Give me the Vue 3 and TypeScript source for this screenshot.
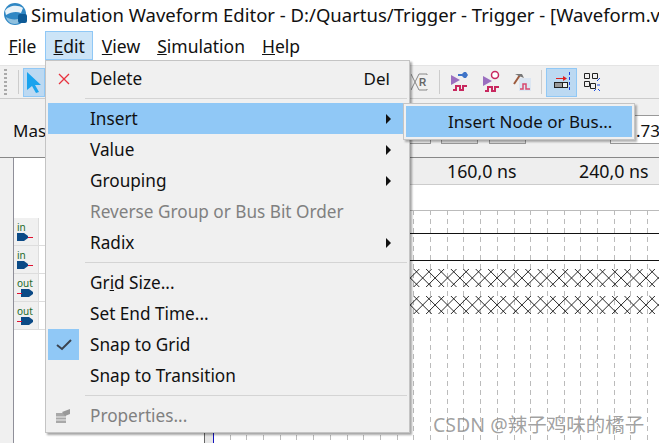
<template>
  <div class="page">
    <!-- 标题栏 -->
    <div class="titlebar">
      <svg class="logo" width="24" height="24" viewBox="0 0 24 24">
        <circle cx="12" cy="12" r="11" fill="#2f87c4" />
        <path d="M2 9c3-5 12-7 18-3l-2 5c-5-2-10-1-15 2z" fill="#e8f2f8" />
        <path d="M3 15c3 2 8 3 12 2l1 4c-5 2-11 1-13-6z" fill="#8fc0de" />
        <rect x="15" y="12" width="9" height="9" rx="2" fill="#0d5a96" />
      </svg>
      <span>Simulation Waveform Editor - D:/Quartus/Trigger - Trigger - [Waveform.v</span>
    </div>

    <!-- 菜单栏 -->
    <div class="menubar">
      <span v-for="m in menus" :key="m.rest" class="menu-title" :class="{ open: m.open }"><u>{{ m.key }}</u>{{ m.rest }}</span>
    </div>

    <!-- 工具栏 -->
    <div class="toolbar">
      <div class="grip"></div>
      <div class="tool-sep first"></div>
      <div class="tool-btn active">
        <svg width="18" height="24" viewBox="0 0 18 24"><path d="M2 2l14 13h-6l4 7-3 1-4-7-5 4z" fill="#19a3ee" /></svg>
      </div>
      <div class="tool-spacer"></div>
      <svg class="tool-icon" width="18" height="18" viewBox="0 0 18 18" fill="none">
        <path d="M0 1l4 8-4 8M4 9l4-8h8v1M4 9l4 8h8v-1" stroke="#888" />
        <text x="8" y="13" class="r-glyph">R</text>
      </svg>
      <div class="tool-sep"></div>
      <svg class="tool-icon wide" width="18" height="24" viewBox="0 0 18 24">
        <path d="M1 5l9 5-9 5z" fill="#9b6fc0" />
        <path d="M8 4h4l2-2h2l2 3-2 3h-2l-2-2H8z" fill="#3f74c8" />
        <path d="M3 20h3v-4h4v4h3v-4h4" fill="none" stroke="#c8285f" stroke-width="2" />
      </svg>
      <svg class="tool-icon wide" width="18" height="24" viewBox="0 0 18 24">
        <path d="M1 6l9 5-9 5z" fill="#9b6fc0" />
        <circle cx="13" cy="5" r="3.5" fill="#fff" stroke="#c8285f" stroke-width="1.5" />
        <path d="M3 21h3v-4h4v4h3v-4h4" fill="none" stroke="#c8285f" stroke-width="2" />
      </svg>
      <svg class="tool-icon wide" width="18" height="24" viewBox="0 0 18 24">
        <rect x="6" y="8" width="12" height="13" fill="#dce6f2" />
        <path d="M1 14l6-9" stroke="#9c5a3c" stroke-width="2" />
        <path d="M2 4h7l2 4-5-2z" fill="#777" />
        <path d="M7 19h3v-5h3v5h4" fill="none" stroke="#d8486f" stroke-width="1.5" />
      </svg>
      <div class="tool-sep tight"></div>
      <div class="tool-btn active snap">
        <svg width="20" height="22" viewBox="0 0 20 22" fill="none">
          <path d="M5 7.500h9" stroke="#e02020" />
          <path d="M12 5l4 2.500-4 2.500z" fill="#e02020" />
          <rect x="3.500" y="11.500" width="13" height="5" fill="#999" stroke="#222" />
          <rect x="11.500" y="11.500" width="5" height="5" fill="#eee" stroke="#222" />
          <path d="M18.500 1v20" stroke="#1c3fe0" stroke-dasharray="3 2" />
        </svg>
      </div>
      <svg class="tool-icon last" width="18" height="20" viewBox="0 0 18 20" fill="none">
        <path d="M1.500 1.500h5v5h-5zM9.500 1.500h5v5h-5zM1.500 9.500h5v5h-5zM7.500 11.500h5v5h-5z" stroke="#222" />
        <path d="M14 9l3-3M14 13h3M13 17l-2 2M15 17l2 2" stroke="#2050e0" />
      </svg>
    </div>

    <!-- 主时间条 -->
    <div class="master-row">
      <span class="master-label">Mas</span>
      <div class="mini-box plain"></div>
      <div class="mini-box gray"></div>
      <div class="mini-box gray"></div>
      <div class="time-input">.73</div>
    </div>

    <!-- 波形编辑区 -->
    <div class="editor">
      <div class="names">
        <div class="name-head"></div>
        <div v-for="(p, i) in pins" :key="i" class="pin-row">
          <div class="pin-cell">
            <span class="pin-label">{{ p }}</span>
            <svg width="16" height="8" viewBox="0 0 16 8">
              <path v-if="p === 'in'" d="M0 0h7l4 3v2L7 8H0z" fill="#0b4a86" />
              <path v-if="p === 'in'" d="M11 4.500h5" stroke="#e01030" stroke-width="1" />
              <path v-if="p === 'out'" d="M4 0h8l4 3v2l-4 3H4z" fill="#0b4a86" />
              <path v-if="p === 'out'" d="M0 4.500h5" stroke="#e01030" stroke-width="1" />
            </svg>
          </div>
        </div>
      </div>
      <div class="value-col"></div>
      <div class="wave">
        <div class="ruler">
          <span class="tick first">160,0 ns</span>
          <span class="tick">240,0 ns</span>
        </div>
        <svg class="wave-svg" width="446" height="259" viewBox="0 0 446 259" fill="none">
          <path d="M0 .5h446" stroke="#bbb" />
          <path v-for="x in gridX" :key="x" :d="`M${x} 0v259`" stroke="#bbb" stroke-dasharray="5 4" />
          <path d="M0 23.500h446M0 50.500h446" stroke="#111" />
          <path v-for="c in crosses" :key="c" :d="c" stroke="#111" stroke-width=".9" />
        </svg>
      </div>
    </div>

    <!-- 展开的 Edit 菜单 -->
    <div class="menu">
      <template v-for="item in items" :key="item.label">
        <div v-if="item.sep" class="menu-sep"></div>
        <div class="menu-item" :class="{ hover: item.hover, disabled: item.disabled }">
          <div class="menu-icon" :class="{ checked: item.icon === 'check' }">
            <svg v-if="item.icon === 'x'" width="14" height="14" viewBox="0 0 14 14"><path d="M2 2l10 10M12 2L2 12" stroke="#e8333f" stroke-width="1.300" /></svg>
            <svg v-if="item.icon === 'check'" width="16" height="12" viewBox="0 0 16 12"><path d="M1 6l5 4 9-9" fill="none" stroke="#3a4350" stroke-width="2" /></svg>
            <svg v-if="item.icon === 'props'" width="17" height="16" viewBox="0 0 17 16">
              <path d="M1 5h10v10H1z" fill="#a8a8a8" />
              <path d="M1 9h10M1 12h10" stroke="#eee" />
              <path d="M7 4l8-3v5l-5 2z" fill="#999" />
            </svg>
          </div>
          <span class="menu-label">
            {{ item.before }}<u v-if="item.under">{{ item.under }}</u>{{ item.label }}
          </span>
          <span v-if="item.shortcut" class="menu-shortcut">{{ item.shortcut }}</span>
          <span v-if="item.sub" class="menu-arrow"></span>
        </div>
      </template>
    </div>

    <!-- 子菜单 -->
    <div class="submenu">
      <div class="submenu-item">Insert Node or Bus...</div>
    </div>

    <div class="watermark">CSDN @辣子鸡味的橘子</div>
  </div>
</template>

<script setup lang="ts">
interface MenuItem {
  label: string
  before?: string
  under?: string
  icon?: 'x' | 'check' | 'props'
  shortcut?: string
  sub?: boolean
  sep?: boolean
  hover?: boolean
  disabled?: boolean
}

const menus = [
  { key: 'F', rest: 'ile', open: false },
  { key: 'E', rest: 'dit', open: true },
  { key: 'V', rest: 'iew', open: false },
  { key: 'S', rest: 'imulation', open: false },
  { key: 'H', rest: 'elp', open: false },
]

const items: MenuItem[] = [
  { label: 'Delete', icon: 'x', shortcut: 'Del' },
  { label: 'Insert', sub: true, sep: true, hover: true },
  { label: 'Value', sub: true },
  { label: 'Grouping', sub: true },
  { label: 'Reverse Group or Bus Bit Order', disabled: true },
  { label: 'Radix', sub: true },
  { before: 'Gr', under: 'i', label: 'd Size...', sep: true },
  { label: 'Set End Time...' },
  { label: 'Snap to Grid', icon: 'check' },
  { label: 'Snap to Transition' },
  { label: 'Properties...', icon: 'props', sep: true, disabled: true },
]

const pins = ['in', 'in', 'out', 'out']

// 波形区从 x=214 开始，虚线间距约 16.7px
const gridX = Array.from({ length: 27 }, (_, i) => Math.round(15.6 + i * 16.7) + 0.5)

// 两行未知值 (X) 波形
const crosses = [59, 86].map((top) => {
  let d = ''
  for (let c = -2.1; c < 456; c += 12.4) {
    d += `M${c - 9} ${top}l18 18M${c + 9} ${top}l-18 18`
  }
  return d
})
</script>

<style scoped>
.page {
  position: relative;
  width: 659px;
  height: 443px;
  overflow: hidden;
  display: flex;
  flex-direction: column;
  background: #f0f0f0;
  font-family: "Noto Sans", "Noto Sans CJK SC", sans-serif;
  font-size: 17px;
  color: #111;
}

.titlebar {
  height: 30px;
  flex: none;
  display: flex;
  align-items: center;
  gap: 4px;
  padding: 0 0 2px 3px;
  box-sizing: border-box;
  background: #fff;
  white-space: nowrap;
  font-size: 18.500px;
  overflow: hidden;
}

.logo {
  flex: none;
}

.menubar {
  height: 35px;
  flex: none;
  display: flex;
  align-items: flex-start;
  padding: 1px 0 0 0;
  background: #fff;
  box-sizing: border-box;
  font-size: 17.500px;
}

.menu-title {
  height: 29px;
  line-height: 28px;
  padding: 0 7.500px;
  box-sizing: border-box;
  border: 1px solid transparent;
}

.menu-title.open {
  background: #cce4f7;
  border-color: #90c8f6;
}

.toolbar {
  height: 34px;
  flex: none;
  display: flex;
  align-items: center;
  box-sizing: border-box;
  border-top: 1px solid #e4e4e4;
  border-bottom: 1px solid #ccc;
  background: #f0f0f0;
}

.grip {
  width: 3px;
  height: 26px;
  margin-left: 4px;
  background: repeating-linear-gradient(#aaa 0 2px, transparent 2px 4px);
}

.tool-sep {
  width: 1px;
  height: 24px;
  background: #ccc;
  margin: 0 10px 0 10px;
}

.tool-sep.first {
  margin: 0 4px 0 11px;
}

.tool-sep.tight {
  margin: 0 4px 0 -4px;
}

.tool-btn {
  height: 29px;
  box-sizing: border-box;
  display: flex;
  align-items: center;
  justify-content: center;
}

.tool-btn.active {
  background: #bcd9f2;
  border: 1px solid #90c8f6;
  width: 22px;
}

.tool-btn.snap {
  width: 31px;
}

.tool-spacer {
  width: 366px;
}

.tool-icon.wide {
  margin-right: 13.500px;
}

.tool-icon.last {
  margin-left: 6px;
}

.r-glyph {
  font-family: "Liberation Sans", sans-serif;
  font-size: 10px;
  font-weight: 700;
  fill: #666;
}

.master-row {
  height: 59px;
  flex: none;
  display: flex;
  align-items: flex-end;
  padding-bottom: 13px;
  box-sizing: border-box;
  border-bottom: 1px solid #888;
  white-space: nowrap;
}

.master-label {
  width: 400px;
  padding-left: 13px;
  box-sizing: border-box;
  margin-bottom: 2px;
}

.mini-box {
  width: 37px;
  height: 24px;
  box-sizing: border-box;
  border: 1px solid #999;
}

.mini-box.plain {
  width: 32px;
  margin-right: 10px;
  background: #f0f0f0;
}

.mini-box.gray {
  background: #e0e0e0;
  margin-right: 11px;
}

.time-input {
  width: 49px;
  height: 29px;
  margin-left: 73px;
  line-height: 30px;
  padding-left: 25px;
  background: #fff;
  border: 1px solid #999;
  border-right: 0;
  box-sizing: border-box;
  overflow: hidden;
}

.editor {
  flex: 1;
  display: flex;
  min-height: 0;
  padding-left: 13px;
}

.names {
  width: 191px;
  flex: none;
  background: #fff;
  border-left: 1px solid #8f8f99;
  box-sizing: border-box;
}

.name-head {
  height: 60px;
}

.pin-row {
  height: 28px;
  box-sizing: border-box;
  border-bottom: 1px solid #ddd;
}

.pin-cell {
  width: 25px;
  height: 27px;
  padding-left: 3px;
  box-sizing: border-box;
  background: #f0f0f0;
  border-right: 1px solid #ddd;
  display: flex;
  flex-direction: column;
  justify-content: flex-end;
  padding-bottom: 4px;
}

.pin-cell svg {
  display: block;
}

.pin-label {
  font-size: 10px;
  line-height: 11px;
  color: #1f6b2a;
}

.value-col {
  width: 9px;
  flex: none;
  background: #e6e6e6;
  border-left: 1px solid #666;
  box-sizing: border-box;
}

.wave {
  flex: 1;
  min-width: 0;
  background: #fff;
  border-left: 1px solid #1414c0;
}

.ruler {
  height: 26px;
  display: flex;
  align-items: center;
  background: #eee;
  font-size: 17.800px;
  border-bottom: 1px solid #ccc;
  padding-left: 233px;
  white-space: nowrap;
  margin-bottom: 25px;
}

.tick {
  width: 132px;
  flex: none;
}

.wave-svg {
  display: block;
}

.menu {
  position: absolute;
  left: 45px;
  top: 60px;
  width: 365px;
  height: 373px;
  box-sizing: border-box;
  padding: 2px 2px;
  background: #f0f0f0;
  border: 1px solid #c4c4c4;
  box-shadow: 2px 2px 2px rgba(0, 0, 0, 0.35);
}

.menu-sep {
  height: 1px;
  margin: 4px 0 4px 37px;
  background: #d4d4d4;
}

.menu-item {
  height: 31px;
  display: flex;
  align-items: center;
  white-space: nowrap;
}

.menu-item.hover {
  background: #90c8f6;
}

.menu-item.disabled {
  color: #808080;
}

.menu-icon {
  width: 31px;
  height: 31px;
  flex: none;
  display: flex;
  align-items: center;
  justify-content: center;
  margin-right: 11px;
}

.menu-icon.checked {
  background: #90c8f6;
}

.menu-label {
  flex: 1;
  font-size: 17.200px;
}

.menu-shortcut {
  margin-right: 17px;
}

.menu-arrow {
  width: 0;
  height: 0;
  margin-right: 16px;
  border-left: 5px solid #111;
  border-top: 5px solid transparent;
  border-bottom: 5px solid transparent;
}

.submenu {
  position: absolute;
  left: 403px;
  top: 103px;
  width: 232px;
  height: 37px;
  box-sizing: border-box;
  padding: 2px;
  background: #f0f0f0;
  border: 1px solid #c4c4c4;
  box-shadow: 2px 2px 2px rgba(0, 0, 0, 0.3);
}

.submenu-item {
  height: 31px;
  line-height: 31px;
  padding-left: 42px;
  background: #90c8f6;
}

.watermark {
  position: absolute;
  left: 433px;
  top: 412px;
  font-size: 19.500px;
  line-height: 26px;
  color: rgba(120, 120, 120, 0.7);
  white-space: nowrap;
}
</style>
